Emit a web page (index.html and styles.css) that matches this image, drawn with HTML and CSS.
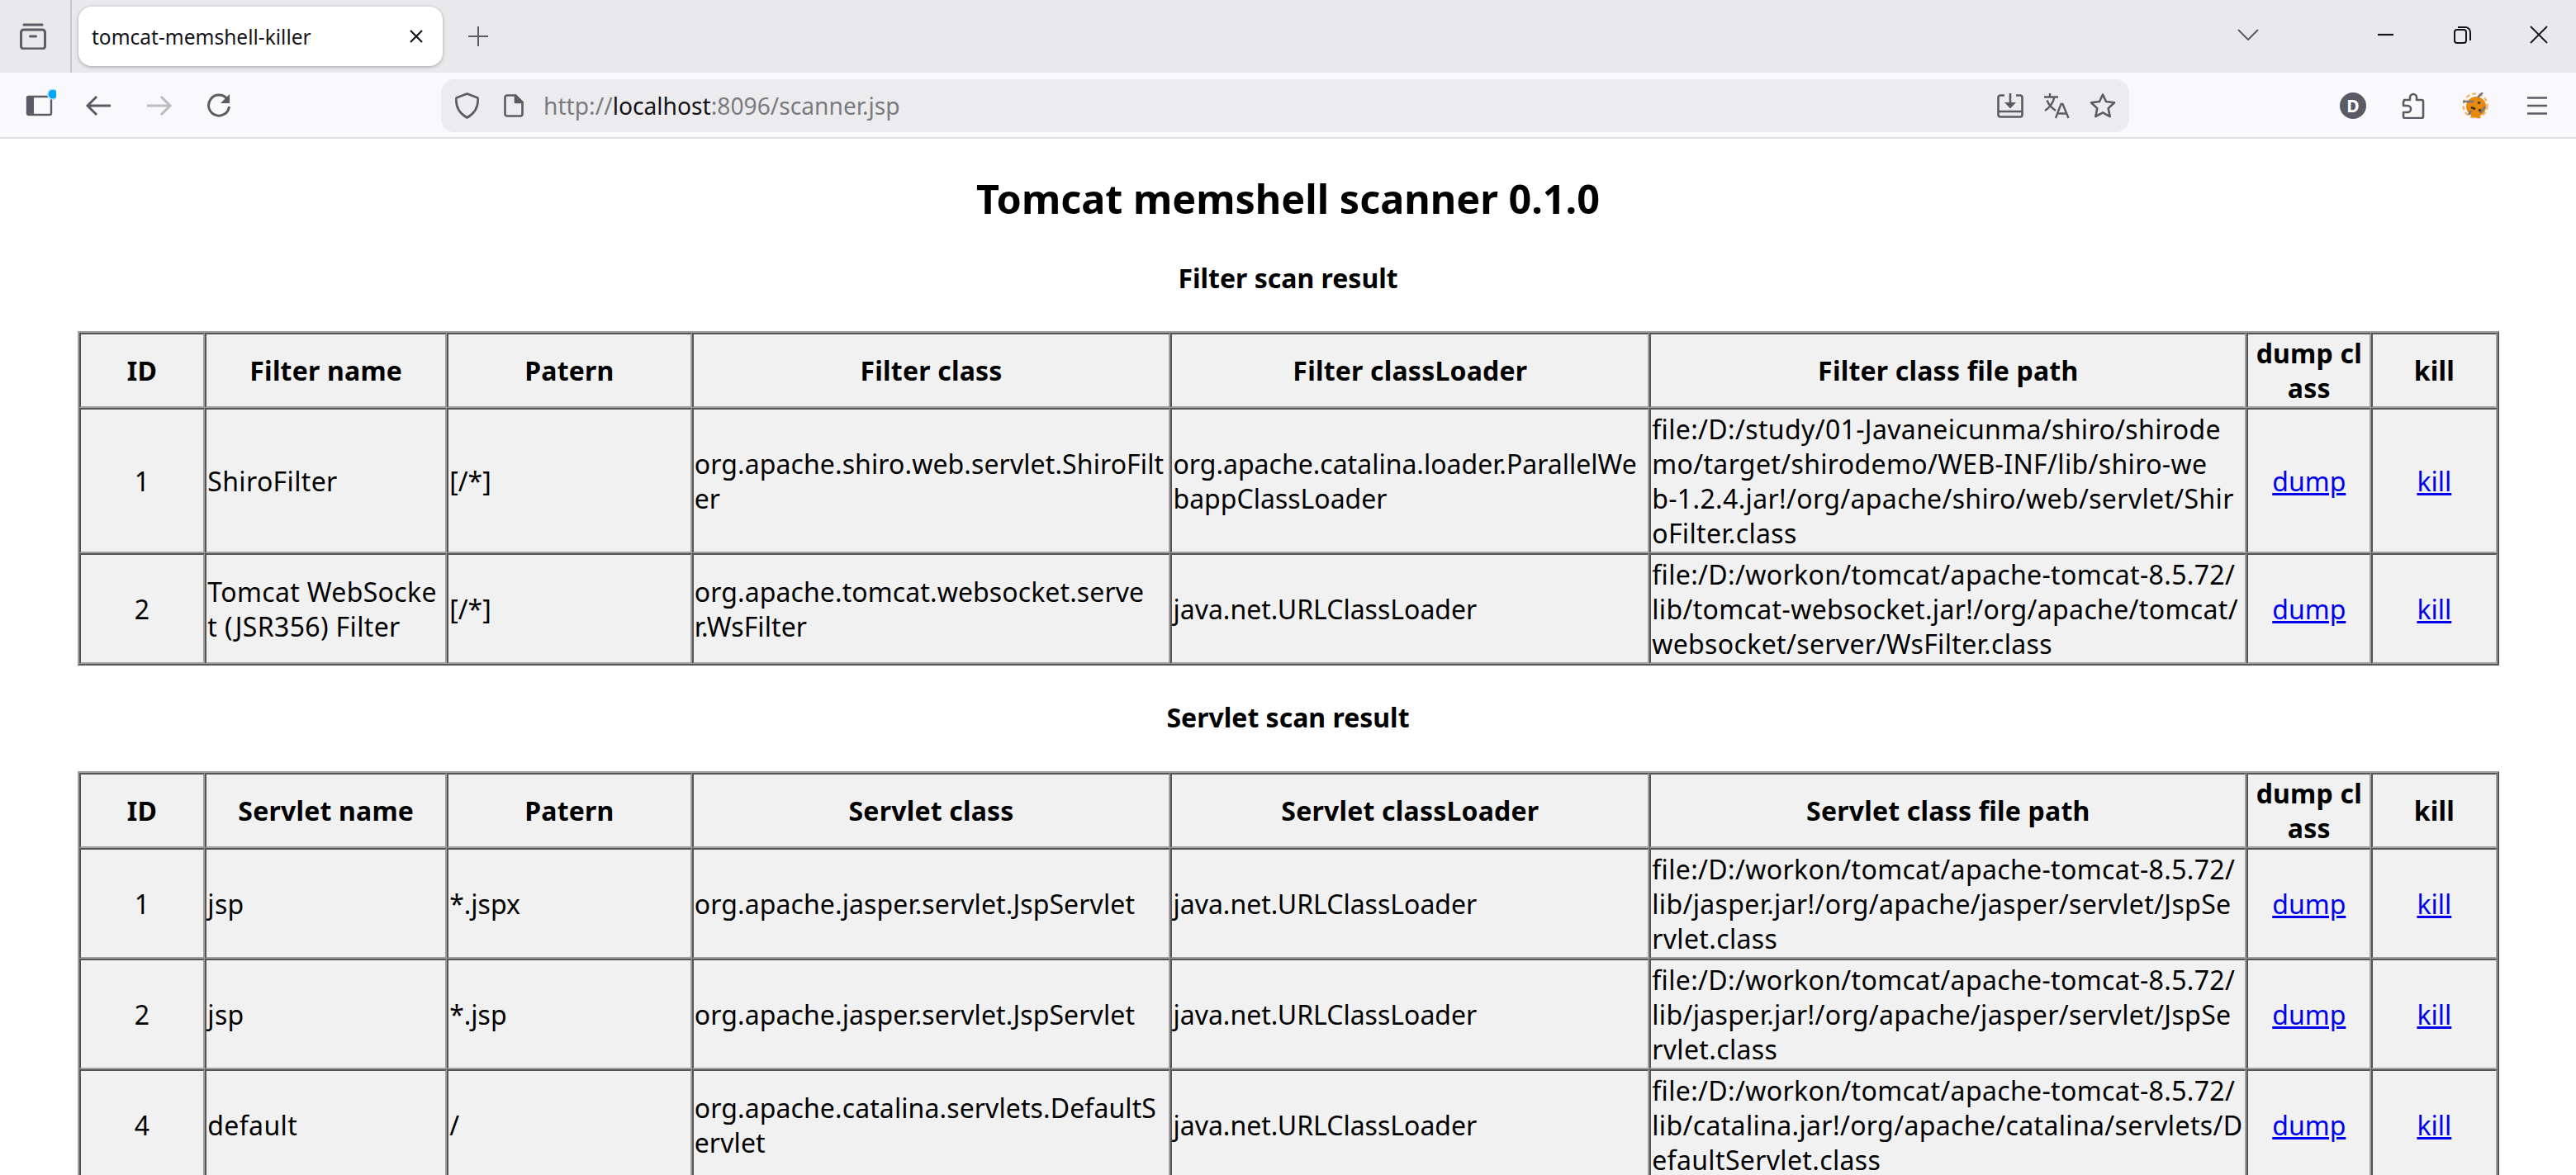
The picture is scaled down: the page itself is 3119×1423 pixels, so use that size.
FILE: index.html
```html
<!DOCTYPE html>
<html lang="en">
<head>
<meta charset="utf-8">
<title>tomcat-memshell-killer</title>
<link rel="stylesheet" href="styles.css">
</head>
<body>
<header class="chrome">
  <div class="tabbar">
    <div class="tabbar-left">
      <svg width="32" height="32" viewBox="0 0 32 32" fill="none" stroke="#5b5b66" stroke-width="3" stroke-linecap="round"><path d="M5 2h22"/><path d="M1.500 11a3 3 0 0 1 3-3h23a3 3 0 0 1 3 3v17a3 3 0 0 1-3 3h-23a3 3 0 0 1-3-3z"/><path d="M12.500 16h7"/></svg>
    </div>
    <div class="tab">
      <span class="tab-title">tomcat-memshell-killer</span>
      <svg width="16" height="16" viewBox="0 0 16 16" stroke="#15141a" stroke-width="2.200" fill="none"><path d="M1 1l14 14M15 1L1 15"/></svg>
    </div>
    <svg class="newtab" width="24" height="24" viewBox="0 0 24 24" stroke="#5b5b66" stroke-width="2" fill="none"><path d="M12 0v24M0 12h24"/></svg>
    <div class="spacer"></div>
    <svg class="chev" width="26" height="14" viewBox="0 0 26 14" stroke="#5b5b66" stroke-width="2" fill="none"><path d="M1 1l12 12L25 1"/></svg>
    <div class="winbtns">
      <svg width="22" height="22" viewBox="0 0 22 22" stroke="#15141a" stroke-width="2.200" fill="none"><path d="M2 11h19"/></svg>
      <svg width="22" height="22" viewBox="0 0 22 22" stroke="#15141a" stroke-width="2" fill="none"><rect x="2" y="5" width="14" height="16" rx="3"/><path d="M6 2h9a6 6 0 0 1 6 6v10"/></svg>
      <svg width="22" height="22" viewBox="0 0 22 22" stroke="#15141a" stroke-width="1.800" fill="none"><path d="M1 1l20 20M21 1L1 21"/></svg>
    </div>
  </div>
  <div class="navbar">
    <div class="navleft">
      <svg width="40" height="40" viewBox="0 0 40 40" fill="none"><rect x="5" y="9" width="29" height="22" rx="2" fill="#f9f9fb" stroke="#5b5b66" stroke-width="2.400"/><path d="M7 8h6v24H7a3 3 0 0 1-3-3V11a3 3 0 0 1 3-3z" fill="#5b5b66"/><circle cx="36" cy="6" r="7" fill="#a9e1fb"/><circle cx="36" cy="6" r="5.300" fill="#00a6f5"/></svg>
      <svg width="40" height="40" viewBox="0 0 40 40" stroke="#5b5b66" stroke-width="3" fill="none"><path d="M34 20H7M17 9L6 20l11 11"/></svg>
      <svg width="40" height="40" viewBox="0 0 40 40" stroke="#bcbcc1" stroke-width="3" fill="none"><path d="M6 20h27M23 9l11 11-11 11"/></svg>
      <svg width="40" height="40" viewBox="0 0 40 40" stroke="#5b5b66" stroke-width="3" fill="none"><path d="M31 12a12.500 12.500 0 1 0 2.500 9"/><path d="M34 6v11H23z" fill="#5b5b66" stroke="none"/></svg>
    </div>
    <div class="urlbar">
      <svg class="shield" width="29" height="32" viewBox="0 0 29 32" stroke="#5b5b66" stroke-width="2.600" fill="none" stroke-linejoin="round"><path d="M14.500 1.500l13 5c1 11-4 19-13 24C5.500 25.500.5 17.500 1.500 6.500z"/></svg>
      <svg class="page-ic" width="24" height="28" viewBox="0 0 24 28" stroke="#5b5b66" stroke-width="2.600" fill="none" stroke-linejoin="round"><path d="M4 1.500h10l8.500 8.500v14a2.500 2.500 0 0 1-2.500 2.500H4A2.500 2.500 0 0 1 1.500 24V4A2.500 2.500 0 0 1 4 1.500z"/><path d="M14 1.500l8.500 8.500H14z" fill="#5b5b66"/></svg>
      <div class="url"><span class="dim">http://</span>localhost<span class="dim">:8096/scanner.jsp</span></div>
      <svg class="u-ic" width="32" height="32" viewBox="0 0 32 32" stroke="#5b5b66" stroke-width="2.600" fill="none"><path d="M9 3.500H4A2.500 2.500 0 0 0 1.500 6v21A2.500 2.500 0 0 0 4 29.500h24a2.500 2.500 0 0 0 2.500-2.500V6A2.500 2.500 0 0 0 28 3.500h-5M1.500 23h29M16 1v12"/><path d="M9 12h14l-7 7.500z" fill="#5b5b66" stroke="none"/></svg>
      <svg class="u-ic" width="32" height="32" viewBox="0 0 32 32" stroke="#5b5b66" stroke-width="2.400" fill="none"><path d="M1 5.500h17M8 1v4.500M13.500 5.500C12 12 8 18 2 22M4.500 9.500c2 5 6 9.500 10.500 12.500M15 31l6.500-17h2L30.500 31M17.500 25.500h11"/></svg>
      <svg class="u-ic" width="32" height="32" viewBox="0 0 32 32" stroke="#5b5b66" stroke-width="2.600" fill="none" stroke-linejoin="round"><path d="M16 2.500l4 8.500 10 1.300-7.300 6.900 2 10-8.700-4.900-8.700 4.900 2-10L2 12.300 12 11z"/></svg>
    </div>
    <div class="spacer"></div>
    <div class="navright">
      <span class="avatar">D</span>
      <svg width="32" height="32" viewBox="0 0 32 32" stroke="#5b5b66" stroke-width="2.600" fill="none" stroke-linejoin="round"><path d="M5 9h7V6a4 4 0 0 1 8 0v3h6a2 2 0 0 1 2 2v18a2 2 0 0 1-2 2H6a2 2 0 0 1-2-2v-5h5a4 4 0 0 0 0-8H4v-4a2 2 0 0 1 1-2z"/></svg>
      <svg width="32" height="32" viewBox="0 0 32 32" fill="none"><circle cx="16" cy="16" r="14.500" stroke="#f0b878" stroke-width="2.500" stroke-dasharray="5 3"/><circle cx="17" cy="17" r="12" fill="#e8890f"/><path d="M1 11h13M19 6l6-6M8 27l3-5M22 25l6-8" stroke="#77777d" stroke-width="2.500"/><path d="M11 18l5 2M19 12l3 1M20 22l3-1" stroke="#3a3226" stroke-width="2.500"/><path d="M11 28l11 2" stroke="#e8890f" stroke-width="3"/></svg>
      <svg width="32" height="32" viewBox="0 0 32 32" stroke="#5b5b66" stroke-width="2.600" fill="none"><path d="M4 6.500h24M4 16h24M4 25.500h24"/></svg>
    </div>
  </div>
</header>
<main class="page">
  <h2 class="title">Tomcat memshell scanner 0.1.0</h2>
  <h4 class="section-title filter-title">Filter scan result</h4>
  <table class="scan">
    <colgroup><col class="c-id"><col class="c-name"><col class="c-pat"><col class="c-cls"><col class="c-ldr"><col class="c-path"><col class="c-dump"><col class="c-kill"></colgroup>
    <tr class="head"><th>ID</th><th>Filter name</th><th>Patern</th><th>Filter class</th><th>Filter classLoader</th><th>Filter class file path</th><th>dump cl<br>ass</th><th>kill</th></tr>
    <tr><td class="ctr">1</td><td class="wide">ShiroFilter</td><td>[/*]</td><td class="cls">org.apache.shiro.web.servlet.ShiroFilt<br>er</td><td>org.apache.catalina.loader.ParallelWe<br>bappClassLoader</td><td class="wide">file:/D:/study/01-Javaneicunma/shiro/shirode<br>mo/target/shirodemo/WEB-INF/lib/shiro-we<br>b-1.2.4.jar!/org/apache/shiro/web/servlet/Shir<br>oFilter.class</td><td class="ctr"><a href="#">dump</a></td><td class="ctr"><a href="#">kill</a></td></tr>
    <tr><td class="ctr">2</td><td class="wide">Tomcat WebSocke<br>t (JSR356) Filter</td><td>[/*]</td><td class="cls">org.apache.tomcat.websocket.serve<br>r.WsFilter</td><td>java.net.URLClassLoader</td><td class="wide">file:/D:/workon/tomcat/apache-tomcat-8.5.72/<br>lib/tomcat-websocket.jar!/org/apache/tomcat/<br>websocket/server/WsFilter.class</td><td class="ctr"><a href="#">dump</a></td><td class="ctr"><a href="#">kill</a></td></tr>
  </table>
  <h4 class="section-title servlet-title">Servlet scan result</h4>
  <table class="scan">
    <colgroup><col class="c-id"><col class="c-name"><col class="c-pat"><col class="c-cls"><col class="c-ldr"><col class="c-path"><col class="c-dump"><col class="c-kill"></colgroup>
    <tr class="head"><th>ID</th><th>Servlet name</th><th>Patern</th><th>Servlet class</th><th>Servlet classLoader</th><th>Servlet class file path</th><th>dump cl<br>ass</th><th>kill</th></tr>
    <tr><td class="ctr">1</td><td class="wide">jsp</td><td>*.jspx</td><td class="cls">org.apache.jasper.servlet.JspServlet</td><td>java.net.URLClassLoader</td><td class="wide">file:/D:/workon/tomcat/apache-tomcat-8.5.72/<br>lib/jasper.jar!/org/apache/jasper/servlet/JspSe<br>rvlet.class</td><td class="ctr"><a href="#">dump</a></td><td class="ctr"><a href="#">kill</a></td></tr>
    <tr><td class="ctr">2</td><td class="wide">jsp</td><td>*.jsp</td><td class="cls">org.apache.jasper.servlet.JspServlet</td><td>java.net.URLClassLoader</td><td class="wide">file:/D:/workon/tomcat/apache-tomcat-8.5.72/<br>lib/jasper.jar!/org/apache/jasper/servlet/JspSe<br>rvlet.class</td><td class="ctr"><a href="#">dump</a></td><td class="ctr"><a href="#">kill</a></td></tr>
    <tr><td class="ctr">4</td><td class="wide">default</td><td>/</td><td class="cls">org.apache.catalina.servlets.DefaultS<br>ervlet</td><td>java.net.URLClassLoader</td><td class="wide">file:/D:/workon/tomcat/apache-tomcat-8.5.72/<br>lib/catalina.jar!/org/apache/catalina/servlets/D<br>efaultServlet.class</td><td class="ctr"><a href="#">dump</a></td><td class="ctr"><a href="#">kill</a></td></tr>
  </table>
</main>
</body>
</html>
```

FILE: styles.css
```css
* { box-sizing: border-box; }
html, body { margin: 0; height: 100%; overflow: hidden; background: #fff; }
body { font-family: "Noto Sans", "Open Sans", sans-serif; color: #000; }
svg { flex: none; display: block; }
.chrome { display: flex; flex-direction: column; }
.tabbar { height: 88px; background: #e9e9ec; display: flex; align-items: center; }
.tabbar-left { width: 87px; height: 88px; display: flex; align-items: center; justify-content: center; border-right: 2px solid #c6c6ca; padding-right: 6px; flex: none; }
.tab { margin-left: 8px; width: 441px; height: 72px; background: #fff; border-radius: 16px; box-shadow: 0 1px 4px rgba(0,0,0,.3); display: flex; align-items: center; justify-content: space-between; padding: 0 24px 0 16px; }
.tab-title { font-size: 24.500px; color: #15141a; }
.newtab { margin-left: 31px; }
.spacer { flex: 1; }
.chev { margin-top: -4px; margin-right: 142px; }
.winbtns { display: flex; align-items: center; gap: 71px; margin-right: 34px; margin-top: -4px; }
.navbar { height: 80px; padding-top: 2px; background: #f9f9fb; border-bottom: 2px solid #e0e0e2; display: flex; align-items: center; }
.navleft { width: 534px; display: flex; align-items: center; gap: 32px; padding-left: 28px; flex: none; }
.urlbar { width: 2044px; height: 64px; flex: none; border-radius: 16px; background: #ececef; display: flex; align-items: center; padding: 0 16px 0 17px; }
.shield { margin-right: 30px; }
.page-ic { margin-right: 24px; }
.u-ic + .u-ic { margin-left: 24px; }
.url { flex: 1; font-size: 28.200px; color: #15141a; white-space: nowrap; }
.dim { color: #7b7b80; }
.navright { display: flex; align-items: center; gap: 43px; margin-right: 31px; }
.avatar { width: 32px; height: 32px; margin-right: -2px; border-radius: 50%; background: #5b5b66; color: #fff; font-size: 21px; font-weight: 700; display: flex; align-items: center; justify-content: center; }
.page { display: flex; flex-direction: column; align-items: center; }
.title { margin: 41px 0 0; font-size: 48.500px; line-height: 63px; font-weight: 700; }
.section-title { margin: 0; font-size: 32px; line-height: 42px; font-weight: 700; }
.filter-title { margin-top: 44px; margin-bottom: 43px; }
.servlet-title { margin-top: 42px; margin-bottom: 44px; }
.scan { width: 2932px; flex: none; table-layout: fixed; border-collapse: separate; border-spacing: 0; border: 2px solid; border-color: #a0a0a0 #555 #555 #a0a0a0; background: #f1f1f1; }
.c-id { width: 5.220%; } .c-name { width: 10%; } .c-pat { width: 10.130%; } .c-cls { width: 19.800%; } .c-ldr { width: 19.800%; } .c-path { width: 24.700%; } .c-dump { width: 5.150%; } .c-kill { width: 5.200%; }
th, td { border: 2px solid; border-color: #555 #a0a0a0 #a0a0a0 #555; font-size: 32px; line-height: 42px; white-space: nowrap; overflow: hidden; }
th { padding: 2px 2px 1px; font-weight: 700; text-align: center; letter-spacing: .2px; }
td { padding: 3px 1px 1px; text-align: left; }
.wide { letter-spacing: .35px; }
.cls { letter-spacing: .1px; }
.ctr { text-align: center; }
a { color: #00e; }
```
